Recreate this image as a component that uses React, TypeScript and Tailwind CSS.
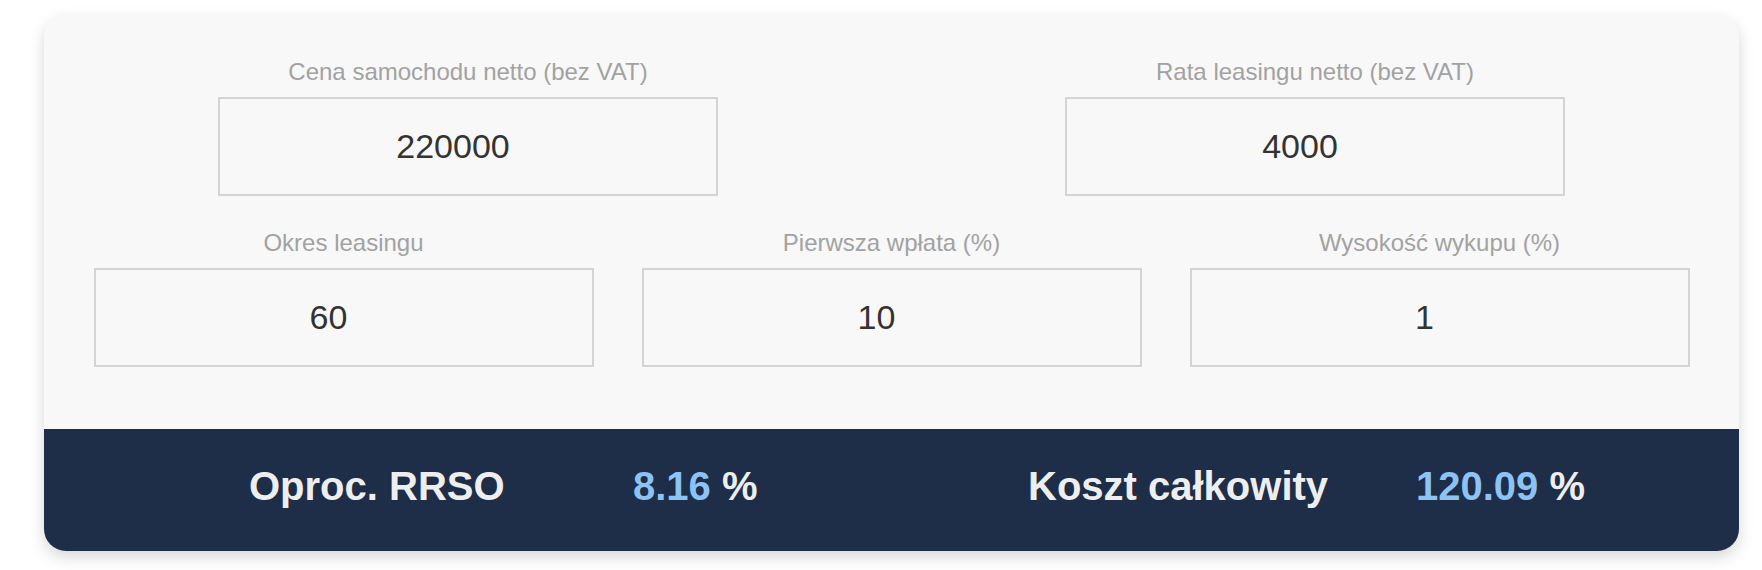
import React from "react";

function Field({ label, value }: { label: string; value: string }) {
  return (
    <div className="flex w-[500px] flex-col items-center">
      <div className="text-[24px] leading-[28px] text-[#a2a2a2]">{label}</div>
      <input
        readOnly
        value={value}
        className="mt-[11px] h-[99px] w-[500px] border-2 border-[#d4d4d4] bg-[#f8f8f8] pr-[30px] text-center text-[34px] text-[#333333] outline-none"
        style={{ fontFamily: "'Liberation Sans', Arial, sans-serif" }}
      />
    </div>
  );
}

export default function App() {
  return (
    <div
      className="h-[570px] overflow-hidden bg-white pl-[44px] pr-[23px] pt-[15px]"
      style={{ fontFamily: "'Liberation Sans', Arial, sans-serif" }}
    >
      <div className="overflow-hidden rounded-[22px] bg-[#f8f8f8] shadow-[0_6px_16px_rgba(0,0,0,0.16)]">
        <div className="flex flex-col pb-[62px] pt-[43px]">
          <div className="flex justify-center gap-[347px]">
            <Field label="Cena samochodu netto (bez VAT)" value="220000" />
            <Field label="Rata leasingu netto (bez VAT)" value="4000" />
          </div>
          <div className="mt-[33px] flex justify-center gap-[48px]">
            <Field label="Okres leasingu" value="60" />
            <Field label="Pierwsza wpłata (%)" value="10" />
            <Field label="Wysokość wykupu (%)" value="1" />
          </div>
        </div>
        <div className="flex h-[122px] items-center bg-[#1e2d48] pb-[9px] pl-[205px] text-[40px] font-bold leading-[48px] text-[#eeeeee]">
          <div className="w-[384px]">Oproc. RRSO</div>
          <div className="w-[395px]">
            <span className="text-[#8cc3f4]">8.16</span> %
          </div>
          <div className="w-[388px]">Koszt całkowity</div>
          <div>
            <span className="text-[#8cc3f4]">120.09</span> %
          </div>
        </div>
      </div>
    </div>
  );
}
